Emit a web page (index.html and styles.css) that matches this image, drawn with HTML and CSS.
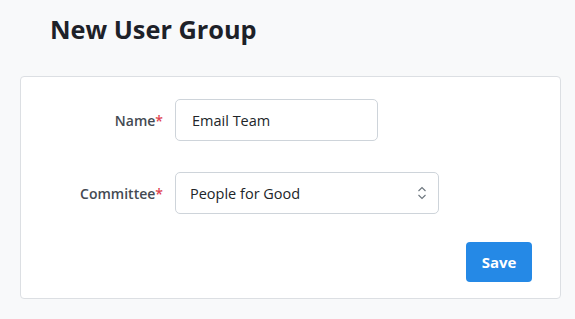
FILE: index.html
```html
<!DOCTYPE html>
<html lang="en">

<head>
    <meta charset="UTF-8">
    <meta name="viewport" content="width=device-width, initial-scale=1.0">
    <title>New User Group</title>
    <link rel="stylesheet" href="styles.css">
</head>

<body>
    <div id="page">
        <h1 class="page-title">New User Group</h1>
        <form class="card" action="">
            <div class="field">
                <label for="group-name">Name<span class="req">*</span></label>
                <input type="text" id="group-name" class="text-input" value="Email Team">
            </div>
            <div class="field">
                <label for="committee">Committee<span class="req">*</span></label>
                <div class="select-wrap">
                    <select id="committee" class="select-input">
                        <option>People for Good</option>
                    </select>
                    <svg class="chevrons" width="10" height="16" viewBox="0 0 10 16">
                        <path d="M1.5 6 L5 2.5 L8.5 6 M1.5 10 L5 13.5 L8.5 10" fill="none" stroke="#6c757d" stroke-width="1.1" />
                    </svg>
                </div>
            </div>
            <div class="actions">
                <input type="button" class="btn-save" value="Save">
            </div>
        </form>
    </div>
</body>

</html>
```

FILE: styles.css
```css
body {
    margin: 0;
    font-family: "Open Sans", "Noto Sans", sans-serif;
    background-color: #f8f9fa;
    color: #212529;
}

#page {
    padding: 11px 14px 20px 20px;
}

.page-title {
    margin: 0 0 28px 30px;
    font-size: 25.3px;
    font-weight: 700;
    line-height: 37px;
    color: #1d2128;
}

.card {
    box-sizing: border-box;
    width: 541px;
    height: 223px;
    padding: 22px 28px 0 20px;
    background-color: white;
    border: 1px solid #dcdfe3;
    border-radius: 4px;
    display: flex;
    flex-direction: column;
    gap: 31px;
}

.field {
    display: grid;
    grid-template-columns: 122px auto;
    column-gap: 12px;
    align-items: center;
}

.field label {
    text-align: right;
    font-size: 14px;
    font-weight: 600;
    color: #444a52;
}

.req {
    color: #e0434f;
}

.text-input,
.select-input {
    box-sizing: border-box;
    height: 42px;
    font-family: inherit;
    font-size: 14.5px;
    color: #212529;
    border: 1px solid #ced4da;
    border-radius: 5px;
    background-color: white;
    outline: none;
}

.text-input {
    width: 203px;
    padding: 0 16px;
}

.select-wrap {
    position: relative;
    width: 264px;
}

.select-input {
    width: 100%;
    padding: 0 30px 0 14px;
    appearance: none;
}

.chevrons {
    position: absolute;
    right: 12px;
    top: 13px;
}

.actions {
    display: flex;
    justify-content: flex-end;
    margin-top: -3px;
}

.btn-save {
    width: 66px;
    height: 40px;
    border: none;
    border-radius: 4px;
    background-color: #2589e6;
    color: white;
    font-family: inherit;
    font-size: 15px;
    font-weight: 700;
}
```
